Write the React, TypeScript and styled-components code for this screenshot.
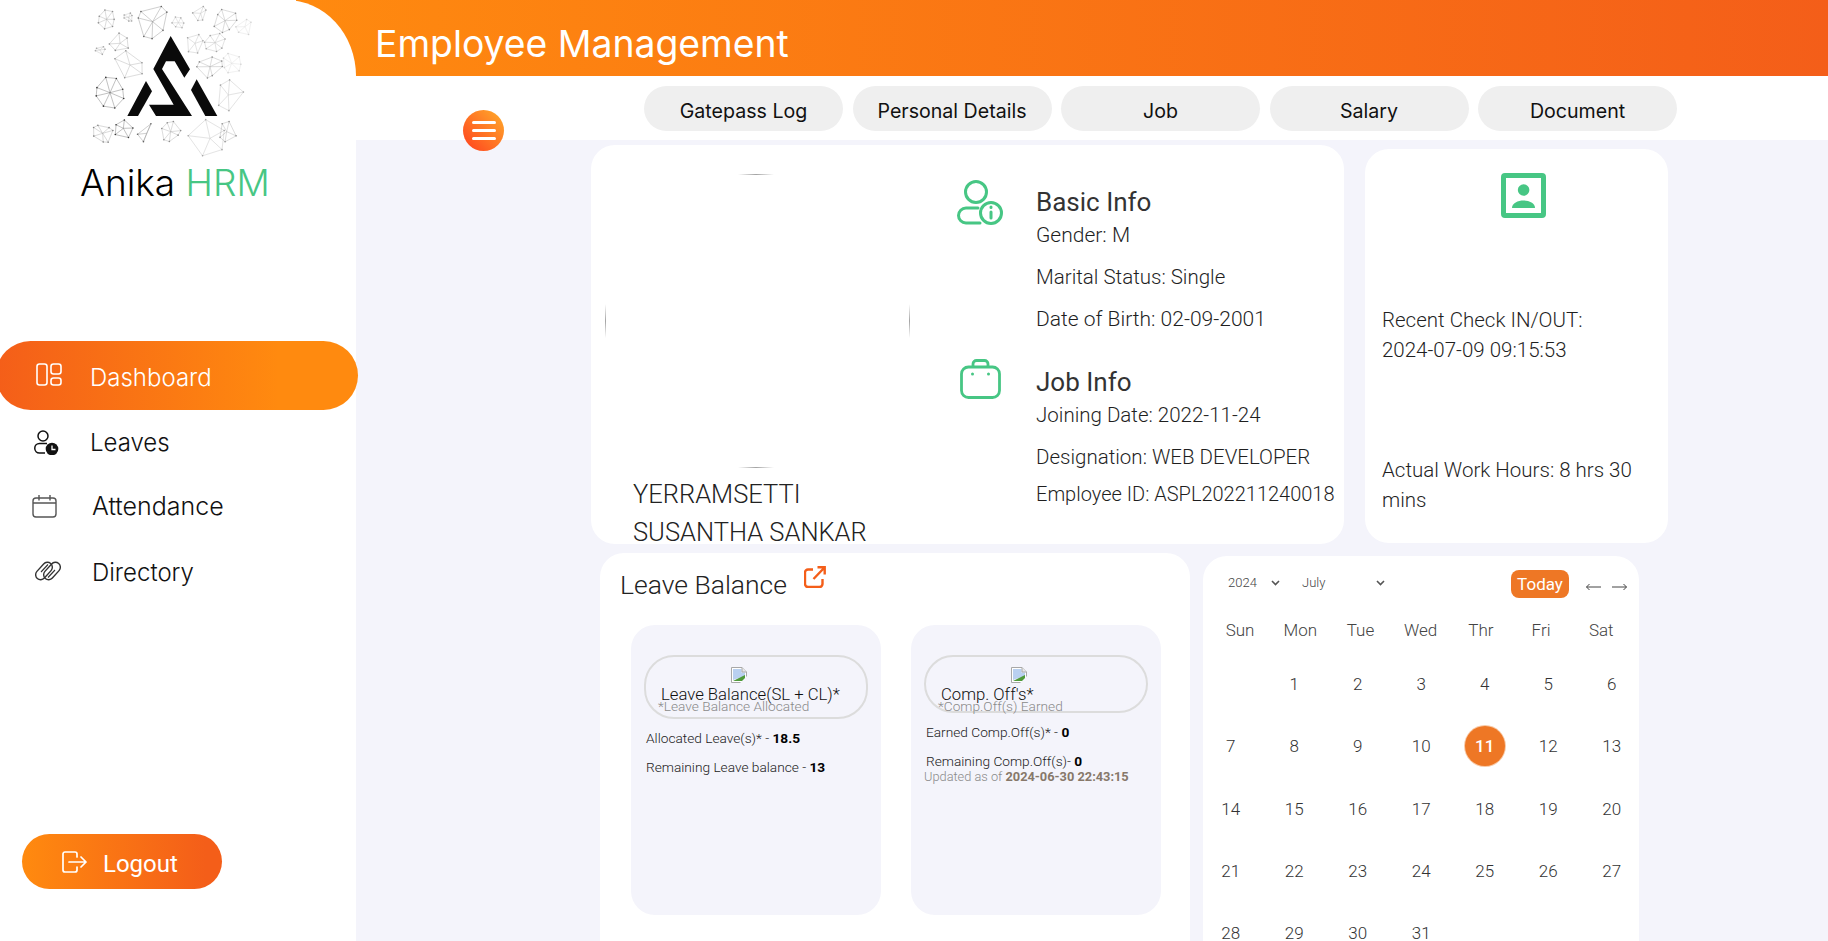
import React from "react";
import styled, { createGlobalStyle } from "styled-components";

const ORANGE = "#ff8a0f";
const RED = "#f45e19";
const GREEN = "#47c684";
const TINT = "#f4f4fb";
const CARD_FONT = `"Roboto", "Liberation Sans", sans-serif`;
const UI_FONT = `"Inter", "Liberation Sans", sans-serif`;

const Global = createGlobalStyle`
  html, body { margin: 0; padding: 0; height: 100%; overflow: hidden; background: #fff; }
  * { box-sizing: border-box; }
`;

const Page = styled.div`
  display: flex;
  height: 941px;
  overflow: hidden;
  font-family: ${CARD_FONT};
`;

const Sidebar = styled.aside`
  position: relative;
  z-index: 1;
  flex: 0 0 356px;
  min-width: 0;
  display: flex;
  flex-direction: column;
  background: #fff;
  border-top-right-radius: 70px 76px;
`;

const LogoBlock = styled.div`
  display: flex;
  flex-direction: column;
  height: 341px;
  padding-left: 80px;
`;

const LogoArt = styled.svg`
  display: block;
  width: 190px;
  height: 160px;
`;

const Brand = styled.div`
  height: 46px;
  font-family: ${UI_FONT};
  font-size: 37px;
  font-weight: 300;
  line-height: 46px;
  color: #000;
  white-space: nowrap;
`;

const BrandAccent = styled.span`
  color: ${GREEN};
`;

const Nav = styled.nav`
  display: flex;
  flex-direction: column;
`;

const NavItem = styled.div<{ $active?: boolean; $height: number; $gap: number; $left: number }>`
  display: flex;
  align-items: center;
  gap: ${(p) => p.$gap}px;
  width: ${(p) => (p.$active ? "362px" : "340px")};
  height: ${(p) => p.$height}px;
  margin-left: ${(p) => (p.$active ? "-4px" : "0")};
  padding-left: ${(p) => p.$left}px;
  border-radius: 35px;
  background: ${(p) => (p.$active ? `linear-gradient(90deg, ${RED}, ${ORANGE} 78%)` : "transparent")};
  color: ${(p) => (p.$active ? "#fff" : "#111")};
  font-family: ${UI_FONT};
  font-weight: 300;
  white-space: nowrap;
`;

const NavIcon = styled.span<{ $shift: number }>`
  display: flex;
  margin-top: ${(p) => p.$shift}px;
`;

const NavLabel = styled.span<{ $shift: number; $size?: number }>`
  margin-top: ${(p) => p.$shift}px;
  font-size: ${(p) => p.$size ?? 24}px;
`;

const Logout = styled.button`
  display: flex;
  align-items: center;
  gap: 16px;
  width: 200px;
  height: 55px;
  margin: auto 0 52px 22px;
  padding: 0 0 0 40px;
  border: 0;
  border-radius: 28px;
  background: linear-gradient(90deg, ${ORANGE}, ${RED} 92%);
  color: #fff;
  font-family: ${CARD_FONT};
  font-size: 24px;
  font-weight: 400;
`;

const LogoutLabel = styled.span`
  margin-top: 5px;
`;

const Main = styled.main`
  flex: 1;
  min-width: 0;
  display: flex;
  flex-direction: column;
`;

const Header = styled.header`
  flex: 0 0 76px;
  display: flex;
  align-items: center;
  margin-left: -60px;
  padding: 0 0 0 79px;
  background: linear-gradient(90deg, ${ORANGE}, ${RED});
`;

const Title = styled.h1`
  margin: 10px 0 0;
  color: #fff;
  font-family: ${UI_FONT};
  font-size: 37.3px;
  font-weight: 400;
  white-space: nowrap;
`;

const TabBar = styled.div`
  position: relative;
  flex: 0 0 64px;
  display: flex;
  gap: 9.5px;
  padding: 10px 0 0 288px;
  background: #fff;
`;

const Tab = styled.div`
  flex: 0 0 199px;
  height: 45px;
  padding-top: 2px;
  border-radius: 23px;
  background: #efefef;
  color: #111;
  font-family: ${UI_FONT};
  font-size: 19.6px;
  line-height: 47px;
  text-align: center;
`;

const MenuButton = styled.button`
  position: absolute;
  left: 107px;
  top: 34px;
  z-index: 2;
  display: flex;
  flex-direction: column;
  align-items: center;
  justify-content: center;
  gap: 5px;
  width: 41px;
  height: 41px;
  padding: 0;
  border: 0;
  border-radius: 50%;
  background: linear-gradient(225deg, #ffae2b, #ff3f1e);
`;

const MenuLine = styled.span`
  width: 24px;
  height: 3px;
  border-radius: 2px;
  background: #fff;
`;

const Content = styled.div`
  flex: 1;
  min-height: 0;
  background: ${TINT};
`;

const TopRow = styled.div`
  display: flex;
  align-items: flex-start;
  gap: 21px;
  padding: 5px 0 0 235px;
`;

const ProfileCard = styled.section`
  flex: 0 0 753px;
  display: flex;
  height: 399px;
  border-radius: 24px;
  background: #fff;
`;

const PhotoCol = styled.div`
  flex: 0 0 360px;
  padding: 29px 0 0 14px;
`;

const PhotoRing = styled.svg`
  display: block;
  width: 305px;
  height: 294px;
`;

const Name = styled.div`
  margin: 7px 0 0 28px;
  width: 260px;
  color: #222;
  font-size: 25.5px;
  font-weight: 300;
  line-height: 38px;
`;

const InfoCol = styled.div`
  flex: 1;
  padding: 42px 0 0 6px;
`;

const InfoBlock = styled.div<{ $top: number }>`
  display: flex;
  margin-top: ${(p) => p.$top}px;
`;

const InfoIcon = styled.div<{ $shift: number; $left: number }>`
  flex: 0 0 79px;
  margin-top: ${(p) => p.$shift}px;
  padding-left: ${(p) => p.$left}px;
`;

const InfoText = styled.div`
  flex: 1;
  white-space: nowrap;
`;

const InfoHeading = styled.h3`
  margin: 0;
  height: 30px;
  color: #333;
  font-size: 26px;
  font-weight: 400;
  line-height: 30px;
`;

const InfoLine = styled.p<{ $gap?: number; $size?: number }>`
  margin: ${(p) => p.$gap ?? 6}px 0 0;
  height: 36px;
  color: #1f1f1f;
  font-size: ${(p) => p.$size ?? 21}px;
  font-weight: 300;
  line-height: 36px;
  &:first-of-type { margin-top: 0; }
`;

const CheckCard = styled.section`
  flex: 0 0 303px;
  height: 394px;
  margin-top: 4px;
  padding: 24px 0 0 17px;
  border-radius: 24px;
  background: #fff;
`;

const CheckIcon = styled.svg`
  display: block;
  width: 45px;
  height: 45px;
  margin-left: 119px;
`;

const CheckText = styled.p<{ $top: number }>`
  margin: ${(p) => p.$top}px 0 0;
  width: 272px;
  color: #1f1f1f;
  font-size: 20.5px;
  font-weight: 300;
  line-height: 30px;
`;

const BottomRow = styled.div`
  display: flex;
  align-items: flex-start;
  gap: 13px;
  margin-top: 9px;
  padding-left: 244px;
`;

const LeaveCard = styled.section`
  flex: 0 0 590px;
  height: 388px;
  padding: 16px 0 0 20px;
  border-radius: 24px 24px 0 0;
  background: #fff;
`;

const LeaveHead = styled.div`
  display: flex;
  align-items: flex-start;
  gap: 17px;
  height: 56px;
`;

const LeaveTitle = styled.h2`
  margin: 0;
  color: #222;
  font-size: 26.5px;
  font-weight: 300;
  line-height: 32px;
`;

const LeaveColumns = styled.div`
  display: flex;
  gap: 30px;
  padding-left: 11px;
`;

const LeaveTile = styled.div`
  flex: 0 0 250px;
  height: 290px;
  padding: 30px 13px 0;
  border-radius: 24px;
  background: ${TINT};
`;

const TilePill = styled.div<{ $height: number }>`
  position: relative;
  height: ${(p) => p.$height}px;
  padding: 10px 0 0 15px;
  border: 2px solid #dcdcdc;
  border-radius: 30px;
`;

const BrokenImage = styled.svg`
  display: block;
  width: 16px;
  height: 16px;
  margin-left: 70px;
`;

const PillTitle = styled.div`
  margin: 2px 0 0 0;
  color: #111;
  font-size: 16.7px;
  font-weight: 300;
  line-height: 19px;
  white-space: nowrap;
`;

const PillSub = styled.div`
  position: absolute;
  left: 12px;
  top: 41px;
  color: #8a8a8a;
  font-size: 13.7px;
  font-weight: 300;
  line-height: 16px;
  white-space: nowrap;
`;

const TileLine = styled.p<{ $top: number }>`
  margin: ${(p) => p.$top}px 0 0 2px;
  height: 16px;
  color: #222;
  font-size: 13.7px;
  font-weight: 300;
  line-height: 16px;
  white-space: nowrap;
`;

const TileStrong = styled.strong`
  color: #000;
  font-weight: 700;
`;

const Updated = styled.p`
  margin: 0;
  height: 16px;
  color: #8a8a8a;
  font-size: 12.8px;
  font-weight: 300;
  line-height: 16px;
  white-space: nowrap;
`;

const UpdatedStrong = styled.strong`
  color: #87786a;
  font-weight: 700;
`;

const CalendarCard = styled.section`
  flex: 0 0 436px;
  height: 385px;
  margin-top: 3px;
  padding-top: 14px;
  border-radius: 24px 24px 0 0;
  background: #fff;
  color: #555;
  overflow: hidden;
`;

const CalToolbar = styled.div`
  display: flex;
  align-items: center;
  height: 28px;
  padding-left: 25px;
`;

const CalSelect = styled.div<{ $width: number; $gap: number }>`
  display: flex;
  align-items: center;
  justify-content: space-between;
  width: ${(p) => p.$width}px;
  margin-right: ${(p) => p.$gap}px;
  margin-top: -3px;
  font-size: 13px;
  font-weight: 300;
  color: #444;
`;

const TodayButton = styled.button`
  width: 58px;
  height: 28px;
  margin-right: 17px;
  padding: 0;
  border: 0;
  border-radius: 8px;
  background: #ee7725;
  color: #fff;
  font-family: ${CARD_FONT};
  font-size: 17px;
  font-weight: 400;
`;

const CalArrows = styled.div`
  display: flex;
  gap: 11px;
  margin-top: 5px;
`;

const WeekRow = styled.div`
  display: grid;
  grid-template-columns: repeat(7, 60.2px);
  height: 30px;
  margin: 17px 0 0 7px;
`;

const WeekDay = styled.div`
  font-size: 17px;
  font-weight: 300;
  line-height: 30px;
  text-align: center;
  color: #444;
`;

const DayGrid = styled.div`
  display: grid;
  grid-template-columns: repeat(7, 63.5px);
  grid-auto-rows: 62.3px;
  margin: 8px 0 0 -4px;
`;

const Day = styled.div`
  display: flex;
  align-items: center;
  justify-content: center;
  font-size: 17px;
  font-weight: 300;
  color: #333;
`;

const TodayDay = styled.span`
  display: flex;
  align-items: center;
  justify-content: center;
  width: 40px;
  height: 40px;
  border-radius: 50%;
  background: #ee7725;
  box-shadow: 0 0 0 1px #f8c9a6;
  color: #fff;
  font-weight: 500;
`;

const clusters: [number, number, number, number, number][] = [
  [80, 58, 28, 7, 0.5], [146, 52, 14, 6, 0.4], [218, 65, 50, 7, 0.7], [295, 68, 18, 6, 0.35],
  [435, 62, 36, 7, 0.5], [362, 40, 22, 5, 0.4], [405, 128, 30, 7, 0.4], [345, 130, 30, 5, 0.4],
  [390, 200, 36, 7, 0.5], [455, 190, 30, 7, 0.2], [120, 130, 30, 5, 0.5], [60, 150, 14, 5, 0.4],
  [150, 195, 45, 5, 0.5], [90, 278, 46, 8, 0.9], [68, 400, 30, 7, 0.55], [272, 395, 30, 7, 0.5],
  [130, 385, 30, 5, 0.9], [200, 400, 30, 3, 0.7], [445, 285, 45, 5, 0.4], [390, 415, 60, 5, 0.4],
  [440, 395, 30, 5, 0.5], [495, 80, 25, 5, 0.2],
];

function Logo() {
  return (
    <LogoArt viewBox="0 0 570 480" aria-hidden>
      {clusters.map(([cx, cy, r, n, o], i) => {
        const pts = Array.from({ length: n }, (_, k) => {
          const a = ((k + 0.25 * Math.sin(k * 3.1 + i)) / n) * Math.PI * 2 + i * 0.7;
          const rr = r * (0.8 + 0.3 * Math.abs(Math.sin(k * 2.3 + i)));
          return [cx + rr * Math.cos(a), cy + rr * 0.95 * Math.sin(a)];
        });
        return (
          <g key={i} opacity={o} stroke="#555" strokeWidth={1.2} fill="none">
            <polygon points={pts.map((p) => p.join(",")).join(" ")} />
            {pts.map((p, k) => (
              <line key={k} x1={cx} y1={cy} x2={p[0]} y2={p[1]} />
            ))}
            {pts.map((p, k) => (
              <circle key={`d${k}`} cx={p[0]} cy={p[1]} r={2.4} fill="#222" stroke="none" />
            ))}
          </g>
        );
      })}
      <g fill="#0a0a0a">
        <polygon points="272,108 330,208 313,233 284,184 258,184 246,207 336,348 228,348 207,314 281,314 220,207" />
        <polygon points="198,243 216,274 174,348 142,348" />
        <polygon points="350,238 412,348 376,348 333,270" />
      </g>
    </LogoArt>
  );
}

const DashboardIcon = () => (
  <svg width="26" height="23" viewBox="0 0 26 23" fill="none" stroke="#fff" strokeWidth="1.6">
    <rect x="1" y="1" width="10" height="21" rx="2.5" />
    <rect x="15" y="1" width="10" height="10" rx="2.5" />
    <rect x="15" y="15" width="10" height="7" rx="2.5" />
  </svg>
);

const LeavesIcon = () => (
  <svg width="26" height="25" viewBox="0 0 26 25" fill="none" stroke="#111" strokeWidth="1.5">
    <circle cx="10" cy="6" r="5" />
    <path d="M14 13.5H6.5a4.7 4.7 0 0 0 0 9.5H12" />
    <circle cx="19" cy="19" r="6.3" fill="#111" stroke="none" />
    <path d="M19 15.5V19.5H22.5" stroke="#fff" strokeWidth="1.3" />
  </svg>
);

const CalendarIcon = () => (
  <svg width="25" height="24" viewBox="0 0 25 24" fill="none" stroke="#555" strokeWidth="1.4">
    <rect x="1" y="4" width="23" height="19" rx="3" />
    <path d="M1 9H24M7 1V6.5M18 1V6.5" />
  </svg>
);

const DirectoryIcon = () => (
  <svg width="26" height="24" viewBox="0 0 26 24" fill="none" stroke="#333" strokeWidth="1.4">
    <rect x="-1" y="7" width="20" height="10" rx="5" transform="rotate(-48 9 12)" />
    <rect x="7" y="7" width="20" height="10" rx="5" transform="rotate(-48 17 12)" />
    <path d="M6 13L13 5.5M13 18.5L20 11" strokeWidth="1.1" />
  </svg>
);

const LogoutIcon = () => (
  <svg width="25" height="22" viewBox="0 0 25 22" fill="none" stroke="#fff" strokeWidth="1.7" strokeLinecap="round" strokeLinejoin="round">
    <path d="M15 6V3a2 2 0 0 0-2-2H3a2 2 0 0 0-2 2v16a2 2 0 0 0 2 2h10a2 2 0 0 0 2-2v-3" />
    <path d="M7 11H24M19 6l5 5-5 5" />
  </svg>
);

const PersonInfoIcon = () => (
  <svg width="46" height="45" viewBox="0 0 46 45" fill="none" stroke={GREEN} strokeWidth="3" strokeLinecap="round">
    <circle cx="19" cy="12" r="10.5" />
    <path d="M21 28H9a7.5 7.5 0 0 0 0 15H23" />
    <circle cx="34" cy="33" r="10.5" />
    <path d="M34 32V38M34 27V27.6" strokeWidth="3" />
  </svg>
);

const BagIcon = () => (
  <svg width="41" height="40" viewBox="0 0 41 40" fill="none" stroke={GREEN} strokeWidth="2.8">
    <rect x="1.5" y="8" width="38" height="30.5" rx="7" />
    <path d="M13 8V5a3.5 3.5 0 0 1 3.5-3.5h8A3.5 3.5 0 0 1 28 5V8" />
    <circle cx="12.5" cy="15" r="1.5" fill={GREEN} stroke="none" />
    <circle cx="28.5" cy="15" r="1.5" fill={GREEN} stroke="none" />
  </svg>
);

const ExternalIcon = () => (
  <svg width="22" height="22" viewBox="0 0 22 22" fill="none" stroke={RED} strokeWidth="2.4" style={{ marginTop: -3 }}>
    <path d="M9 3.5H4a3 3 0 0 0-3 3V18a3 3 0 0 0 3 3h11.5a3 3 0 0 0 3-3v-5" />
    <path d="M9.5 13L20.5 1.5M13.5 1.3H20.7V8.5" />
  </svg>
);

const BrokenImg = () => (
  <BrokenImage viewBox="0 0 16 16" aria-hidden>
    <path d="M.5.5H11L15.5 5V15.5H.5Z" fill="#fff" stroke="#a8a8a8" />
    <path d="M2 2H10.5V5.5H14V9L2 13Z" fill="#b9d0f0" />
    <path d="M2 14L14 8V14Z" fill="#4f9a3a" />
    <path d="M11 .5V5H15.5" fill="#e8e8e8" stroke="#a8a8a8" />
    <path d="M9 16L16 9V16Z" fill="#f4f4fb" />
  </BrokenImage>
);

const Chevron = () => (
  <svg width="9" height="6" viewBox="0 0 9 6" fill="none" stroke="#555" strokeWidth="1.6">
    <path d="M1 1L4.5 4.5L8 1" />
  </svg>
);

const Arrow = ({ right }: { right?: boolean }) => (
  <svg width="15" height="8" viewBox="0 0 15 8" fill="none" stroke="#444" strokeWidth="1">
    <path d={right ? "M0 4H14.5M11.5 1L14.5 4L11.5 7" : "M15 4H.5M3.5 1L.5 4L3.5 7"} />
  </svg>
);

const days: (number | null)[] = [null, ...Array.from({ length: 31 }, (_, i) => i + 1)];

export default function App() {
  return (
    <>
      <Global />
      <Page>
        <Sidebar>
          <LogoBlock>
            <Logo />
            <Brand>
              Anika <BrandAccent>HRM</BrandAccent>
            </Brand>
          </LogoBlock>
          <Nav>
            <NavItem $active $height={69} $gap={28} $left={40}>
              <NavIcon $shift={-2}><DashboardIcon /></NavIcon>
              <NavLabel $shift={3}>Dashboard</NavLabel>
            </NavItem>
            <NavItem $height={64} $gap={31} $left={33}>
              <NavIcon $shift={0}><LeavesIcon /></NavIcon>
              <NavLabel $shift={0}>Leaves</NavLabel>
            </NavItem>
            <NavItem $height={64} $gap={35} $left={32}>
              <NavIcon $shift={0}><CalendarIcon /></NavIcon>
              <NavLabel $shift={0} $size={25}>Attendance</NavLabel>
            </NavItem>
            <NavItem $height={66} $gap={31} $left={35}>
              <NavIcon $shift={-1}><DirectoryIcon /></NavIcon>
              <NavLabel $shift={3}>Directory</NavLabel>
            </NavItem>
          </Nav>
          <Logout>
            <LogoutIcon />
            <LogoutLabel>Logout</LogoutLabel>
          </Logout>
        </Sidebar>
        <Main>
          <Header>
            <Title>Employee Management</Title>
          </Header>
          <TabBar>
            <MenuButton aria-label="menu">
              <MenuLine />
              <MenuLine />
              <MenuLine />
            </MenuButton>
            {["Gatepass Log", "Personal Details", "Job", "Salary", "Document"].map((t) => (
              <Tab key={t}>{t}</Tab>
            ))}
          </TabBar>
          <Content>
            <TopRow>
              <ProfileCard>
                <PhotoCol>
                  <PhotoRing viewBox="0 0 305 294" aria-hidden>
                    <defs>
                      <linearGradient id="fadeH" x1="0" x2="1" y1="0" y2="0">
                        <stop offset="0" stopColor="#999" stopOpacity="0" />
                        <stop offset="0.5" stopColor="#999" stopOpacity="0.9" />
                        <stop offset="1" stopColor="#999" stopOpacity="0" />
                      </linearGradient>
                      <linearGradient id="fadeV" x1="0" x2="0" y1="0" y2="1">
                        <stop offset="0" stopColor="#999" stopOpacity="0" />
                        <stop offset="0.5" stopColor="#999" stopOpacity="0.9" />
                        <stop offset="1" stopColor="#999" stopOpacity="0" />
                      </linearGradient>
                    </defs>
                    <rect x="133" y="0" width="36" height="1" fill="url(#fadeH)" />
                    <rect x="133" y="293" width="36" height="1" fill="url(#fadeH)" />
                    <rect x="0" y="130" width="1" height="34" fill="url(#fadeV)" />
                    <rect x="304" y="130" width="1" height="34" fill="url(#fadeV)" />
                  </PhotoRing>
                  <Name>YERRAMSETTI SUSANTHA SANKAR</Name>
                </PhotoCol>
                <InfoCol>
                  <InfoBlock $top={0}>
                    <InfoIcon $shift={-7} $left={0}>
                      <PersonInfoIcon />
                    </InfoIcon>
                    <InfoText>
                      <InfoHeading>Basic Info</InfoHeading>
                      <InfoLine>Gender: M</InfoLine>
                      <InfoLine $size={20.5}>Marital Status: Single</InfoLine>
                      <InfoLine>Date of Birth: 02-09-2001</InfoLine>
                    </InfoText>
                  </InfoBlock>
                  <InfoBlock $top={30}>
                    <InfoIcon $shift={-8} $left={3}>
                      <BagIcon />
                    </InfoIcon>
                    <InfoText>
                      <InfoHeading>Job Info</InfoHeading>
                      <InfoLine $size={20.5}>Joining Date: 2022-11-24</InfoLine>
                      <InfoLine $size={20.5}>Designation: WEB DEVELOPER</InfoLine>
                      <InfoLine $gap={1} $size={20}>Employee ID: ASPL202211240018</InfoLine>
                    </InfoText>
                  </InfoBlock>
                </InfoCol>
              </ProfileCard>
              <CheckCard>
                <CheckIcon viewBox="0 0 45 45" aria-hidden>
                  <rect x="2.5" y="2.5" width="40" height="40" rx="1.5" fill="none" stroke={GREEN} strokeWidth="5" />
                  <circle cx="22.6" cy="17" r="5.8" fill={GREEN} />
                  <path d="M11 35c0-5 6-7.5 11.5-7.5S34 30 34 35Z" fill={GREEN} />
                </CheckIcon>
                <CheckText $top={87}>
                  Recent Check IN/OUT:
                  <br />
                  2024-07-09 09:15:53
                </CheckText>
                <CheckText $top={90}>Actual Work Hours: 8 hrs 30 mins</CheckText>
              </CheckCard>
            </TopRow>
            <BottomRow>
              <LeaveCard>
                <LeaveHead>
                  <LeaveTitle>Leave Balance</LeaveTitle>
                  <ExternalIcon />
                </LeaveHead>
                <LeaveColumns>
                  <LeaveTile>
                    <TilePill $height={64}>
                      <BrokenImg />
                      <PillTitle>Leave Balance(SL + CL)*</PillTitle>
                      <PillSub>*Leave Balance Allocated</PillSub>
                    </TilePill>
                    <TileLine $top={11}>
                      Allocated Leave(s)* - <TileStrong>18.5</TileStrong>
                    </TileLine>
                    <TileLine $top={13}>
                      Remaining Leave balance - <TileStrong>13</TileStrong>
                    </TileLine>
                  </LeaveTile>
                  <LeaveTile>
                    <TilePill $height={58}>
                      <BrokenImg />
                      <PillTitle>Comp. Off's*</PillTitle>
                      <PillSub>*Comp.Off(s) Earned</PillSub>
                    </TilePill>
                    <TileLine $top={11}>
                      Earned Comp.Off(s)* - <TileStrong>0</TileStrong>
                    </TileLine>
                    <TileLine $top={13}>
                      Remaining Comp.Off(s)- <TileStrong>0</TileStrong>
                    </TileLine>
                    <Updated>
                      Updated as of <UpdatedStrong>2024-06-30 22:43:15</UpdatedStrong>
                    </Updated>
                  </LeaveTile>
                </LeaveColumns>
              </LeaveCard>
              <CalendarCard>
                <CalToolbar>
                  <CalSelect $width={52} $gap={22}>
                    2024
                    <Chevron />
                  </CalSelect>
                  <CalSelect $width={83} $gap={126}>
                    July
                    <Chevron />
                  </CalSelect>
                  <TodayButton>Today</TodayButton>
                  <CalArrows>
                    <Arrow />
                    <Arrow right />
                  </CalArrows>
                </CalToolbar>
                <WeekRow>
                  {["Sun", "Mon", "Tue", "Wed", "Thr", "Fri", "Sat"].map((d) => (
                    <WeekDay key={d}>{d}</WeekDay>
                  ))}
                </WeekRow>
                <DayGrid>
                  {days.map((d, i) => (
                    <Day key={i}>{d === 11 ? <TodayDay>{d}</TodayDay> : d}</Day>
                  ))}
                </DayGrid>
              </CalendarCard>
            </BottomRow>
          </Content>
        </Main>
      </Page>
    </>
  );
}
